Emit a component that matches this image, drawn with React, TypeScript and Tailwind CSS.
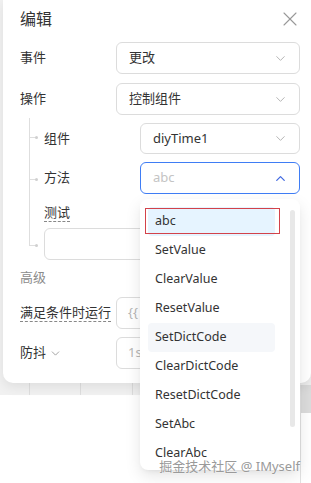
import { ChevronDown, ChevronUp, X } from 'lucide-react'

const font = { fontFamily: '"Noto Sans", "Noto Sans CJK SC", sans-serif' }

const Select = ({ value, placeholder, open }: { value?: string; placeholder?: string; open?: boolean }) => (
    <div
        className={`flex-1 h-full flex items-center justify-between pl-[12px] pr-[11px] rounded-[6px] border bg-white ${
            open ? 'border-[#3f7df5]' : 'border-[#dcdcdc]'
        }`}
    >
        <span className={value ? 'text-[#333]' : 'text-[#c4c4c4]'}>{value ?? placeholder}</span>
        {open ? (
            <ChevronUp size={15} strokeWidth={2} className="text-[#4169e1]" />
        ) : (
            <ChevronDown size={15} strokeWidth={1.4} className="text-[#aaa]" />
        )}
    </div>
)

const Input = ({ value }: { value?: string }) => (
    <div className="flex-1 h-full flex items-center pl-[11px] rounded-[6px] border border-[#dcdcdc] bg-white text-[#b5b5b5]">
        {value}
    </div>
)

const methods = [
    'abc',
    'SetValue',
    'ClearValue',
    'ResetValue',
    'SetDictCode',
    'ClearDictCode',
    'ResetDictCode',
    'SetAbc',
    'ClearAbc',
]

export default function App() {
    return (
        <div className="relative w-[311px] h-[483px] overflow-hidden bg-white text-[13px]" style={font}>
            {/* sheet behind the dialog */}
            <div className="h-[395px] w-full bg-[#f1f1f1] flex">
                <div className="w-[30px] border-r border-[#dedede]" />
                <div className="w-[51px] border-r border-[#dedede]" />
                <div className="w-[52px] border-r border-[#dedede]" />
                <div className="w-[167px] border-r border-[#dedede]" />
            </div>
            <div className="absolute left-[300px] top-[385px] w-[11px] h-[28px] bg-[#dcdcdc]" />
            <div className="absolute left-[300px] top-[385px] w-px h-[98px] bg-[#e2e2e2]" />

            {/* dialog */}
            <div className="absolute left-[3px] top-0 w-[308px] h-[383px] bg-white rounded-b-[10px] shadow-[0_4px_12px_rgba(0,0,0,0.08)] pl-[17px] pr-[9px] text-[#333]">
                <div className="h-[38px] flex items-center justify-between">
                    <span className="text-[16px] text-[#333]">编辑</span>
                    <X size={24} strokeWidth={1.1} className="text-[#999]" />
                </div>
                <div className="mt-[4px] h-[32px] flex items-center mr-[2px]">
                    <span className="w-[96px]">事件</span>
                    <Select value="更改" />
                </div>
                <div className="mt-[9px] h-[32px] flex items-center mr-[2px]">
                    <span className="w-[96px]">操作</span>
                    <Select value="控制组件" />
                </div>

                <div className="relative pl-[24px] mr-[2px]">
                    {/* tree lines */}
                    <div className="absolute left-[9px] top-[3px] w-px h-[128px] bg-[#dedede]" />
                    <div className="absolute left-[9px] top-[22px] w-[7px] h-px bg-[#dedede]" />
                    <div className="absolute left-[15px] top-[21px] w-[3px] h-[3px] rounded-full bg-[#d0d0d0]" />
                    <div className="absolute left-[9px] top-[64px] w-[7px] h-px bg-[#dedede]" />
                    <div className="absolute left-[15px] top-[63px] w-[3px] h-[3px] rounded-full bg-[#d0d0d0]" />
                    <div className="absolute left-[9px] top-[130px] w-[7px] h-px bg-[#dedede]" />
                    <div className="absolute left-[15px] top-[129px] w-[3px] h-[3px] rounded-full bg-[#d0d0d0]" />

                    <div className="pt-[8px] h-[39px] flex items-center">
                        <span className="w-[96px]">组件</span>
                        <Select value="diyTime1" />
                    </div>
                    <div className="mt-[8px] h-[32px] flex items-center">
                        <span className="w-[96px]">方法</span>
                        <Select placeholder="abc" open />
                    </div>
                    <div className="mt-[10px] h-[18px] flex items-center">
                        <span className="border-b border-dashed border-[#888] leading-[17px]">测试</span>
                    </div>
                    <div className="mt-[6px] h-[32px] flex">
                        <Input />
                    </div>
                </div>

                <div className="mt-[8px] h-[20px] flex items-center text-[#8c8c8c]">高级</div>
                <div className="mt-[9px] h-[32px] flex items-center mr-[2px]">
                    <span className="w-[96px]">
                        <span className="border-b border-dashed border-[#888] leading-[17px]">满足条件时运行</span>
                    </span>
                    <Input value="{{" />
                </div>
                <div className="mt-[8px] h-[32px] flex items-center mr-[2px]">
                    <span className="w-[96px] flex items-center gap-[3px]">
                        防抖
                        <ChevronDown size={13} strokeWidth={1.4} className="text-[#888]" />
                    </span>
                    <Input value="1s" />
                </div>
            </div>

            {/* dropdown menu */}
            <div className="absolute left-[140px] top-[199px] w-[160px] h-[271px] bg-white rounded-[8px] shadow-[0_6px_16px_rgba(0,0,0,0.1),0_3px_6px_-4px_rgba(0,0,0,0.12)] overflow-hidden">
                <div className="flex pt-[8px] pl-[8px]">
                    <div className="w-[127px] flex flex-col text-[12.5px] text-[#333]">
                        {methods.map((m, i) => (
                            <div
                                key={m}
                                className={`h-[29px] flex items-center pl-[7px] rounded-[4px] ${
                                    i === 0 ? 'bg-[#e6f4ff]' : i === 4 ? 'bg-[#f5f7fa]' : ''
                                }`}
                            >
                                {m}
                            </div>
                        ))}
                    </div>
                    <div className="ml-[15px] mt-[3px] w-[5px] h-[217px] rounded-full bg-[#e8e8e8]" />
                </div>
            </div>
            <div className="absolute left-[145px] top-[208px] w-[135px] h-[26px] border border-[#d3424a]" />

            <div className="absolute right-[11px] top-[457px] text-[13px] text-[#9a9a9a] [text-shadow:0_0_2px_#fff]">
                掘金技术社区 @ IMyself
            </div>
        </div>
    )
}
